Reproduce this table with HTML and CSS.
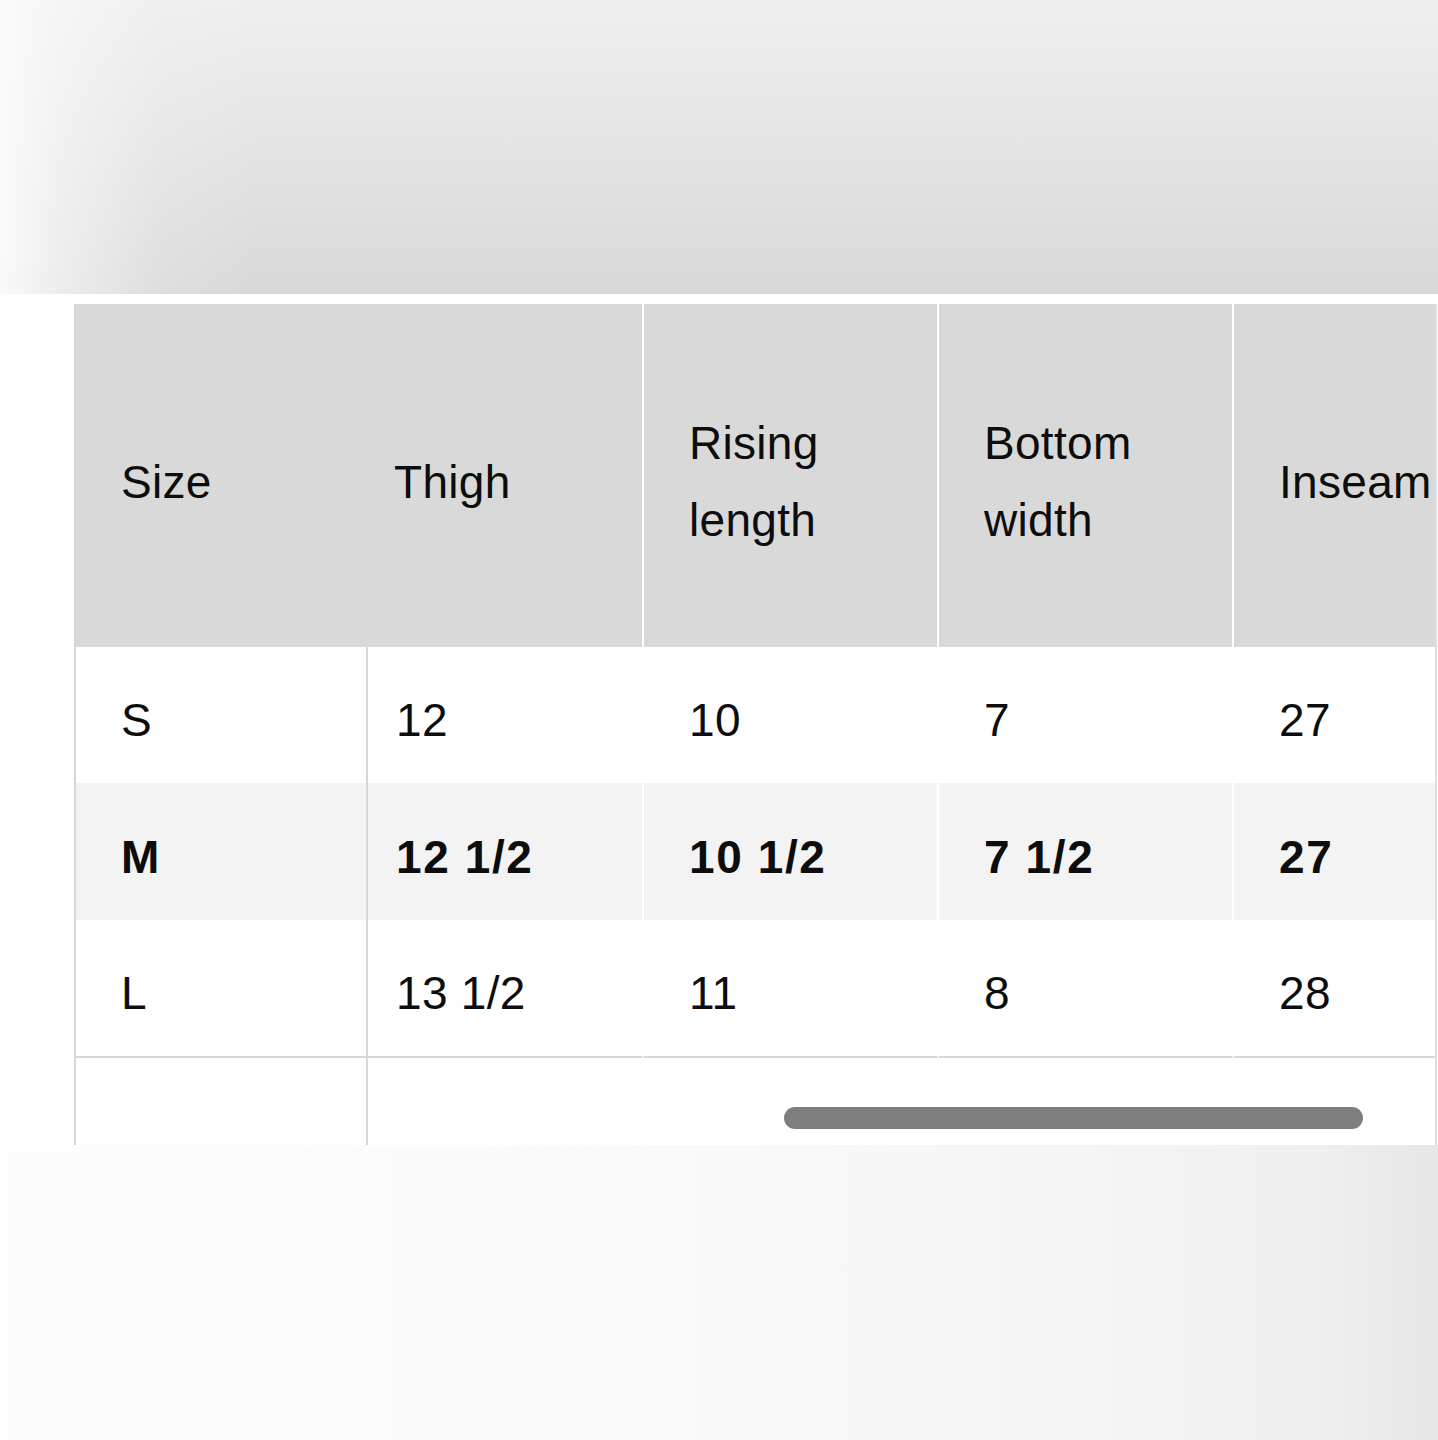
FILE: index.html
```html
<!DOCTYPE html>
<html lang="en">
<head>
<meta charset="utf-8">
<title>Size chart</title>
<link rel="stylesheet" href="styles.css">
</head>
<body>
<div class="top-band"></div>
<div class="gap"></div>
<div class="chart">
  <div class="scroller">
    <table class="size-table">
      <thead>
        <tr>
          <th class="c1">Size</th>
          <th class="c2">Thigh</th>
          <th class="c3">Rising<br>length</th>
          <th class="c4">Bottom<br>width</th>
          <th class="c5">Inseam</th>
        </tr>
      </thead>
      <tbody>
        <tr>
          <td class="c1">S</td><td class="c2">12</td><td class="c3">10</td><td class="c4">7</td><td class="c5">27</td>
        </tr>
        <tr class="active">
          <td class="c1">M</td><td class="c2">12 1/2</td><td class="c3">10 1/2</td><td class="c4">7 1/2</td><td class="c5">27</td>
        </tr>
        <tr class="last">
          <td class="c1">L</td><td class="c2">13 1/2</td><td class="c3">11</td><td class="c4">8</td><td class="c5">28</td>
        </tr>
      </tbody>
    </table>
    <div class="track">
      <div class="track-sticky"></div>
      <div class="thumb"></div>
    </div>
  </div>
</div>
<div class="bottom-band"></div>
</body>
</html>
```
FILE: styles.css
```css
html, body {
  margin: 0;
  padding: 0;
  background: #ffffff;
}
body {
  width: 1438px;
  height: 1440px;
  overflow: hidden;
  font-family: "Liberation Sans", Arial, Helvetica, sans-serif;
  color: #0d0d0d;
}
.top-band {
  height: 294px;
  background:
    linear-gradient(to right, rgba(252,252,252,0.95) 0px, rgba(250,250,250,0.6) 60px, rgba(245,245,245,0.2) 160px, rgba(240,240,240,0) 260px),
    linear-gradient(to bottom, #efefef 0%, #e4e4e4 50%, #d8d8d8 100%);
}
.gap {
  height: 10px;
}
.chart {
  padding-left: 74px;
}
.scroller {
  width: 1359px;
  overflow: hidden;
  border-left: 2px solid #d6d6d6;
  border-right: 2px solid #dedede;
}
.size-table {
  border-collapse: separate;
  border-spacing: 0;
  table-layout: fixed;
  width: 1530px;
}
.size-table th,
.size-table td {
  text-align: left;
  font-size: 46px;
  letter-spacing: 0.3px;
  padding: 10px 0 0 45px;
  box-sizing: border-box;
  white-space: nowrap;
}
.size-table th {
  font-weight: normal;
  height: 343px;
  line-height: 77px;
  background: #d9d9d9;
  vertical-align: middle;
  padding-top: 13px;
}
.size-table td {
  height: 136px;
  line-height: 52px;
  vertical-align: middle;
  background: #ffffff;
}
.size-table .c1 { width: 292px; }
.size-table .c2 { width: 276px; padding-left: 28px; }
.size-table .c3 { width: 295px; }
.size-table .c4 { width: 295px; }
.size-table .c5 { width: 372px; }

.size-table th.c2,
.size-table th.c3,
.size-table th.c4 {
  border-right: 2px solid #ffffff;
}
.size-table th.c2 { padding-left: 26px; }
.size-table td.c1 {
  border-right: 2px solid #d8d8d8;
}
.size-table td.c2,
.size-table td.c3,
.size-table td.c4 {
  border-right: 2px solid #ffffff;
}
.size-table tr.active td {
  background: #f3f3f3;
  font-weight: bold;
  letter-spacing: 1.6px;
  height: 137px;
}
.size-table tr.last td {
  height: 138px;
  border-bottom: 2px solid #d6d6d6;
}
.track {
  display: flex;
  height: 87px;
}
.track-sticky {
  width: 290px;
  flex: none;
  border-right: 2px solid #d8d8d8;
}
.thumb {
  flex: none;
  width: 579px;
  height: 22px;
  margin-left: 416px;
  margin-top: 49px;
  border-radius: 11px;
  background: #7e7e7e;
}
.bottom-band {
  height: 295px;
  background:
    linear-gradient(to right, #fdfdfd 0%, #fafafa 45%, #f5f5f5 75%, #efefef 92%, #e6e6e6 100%);
}
```
